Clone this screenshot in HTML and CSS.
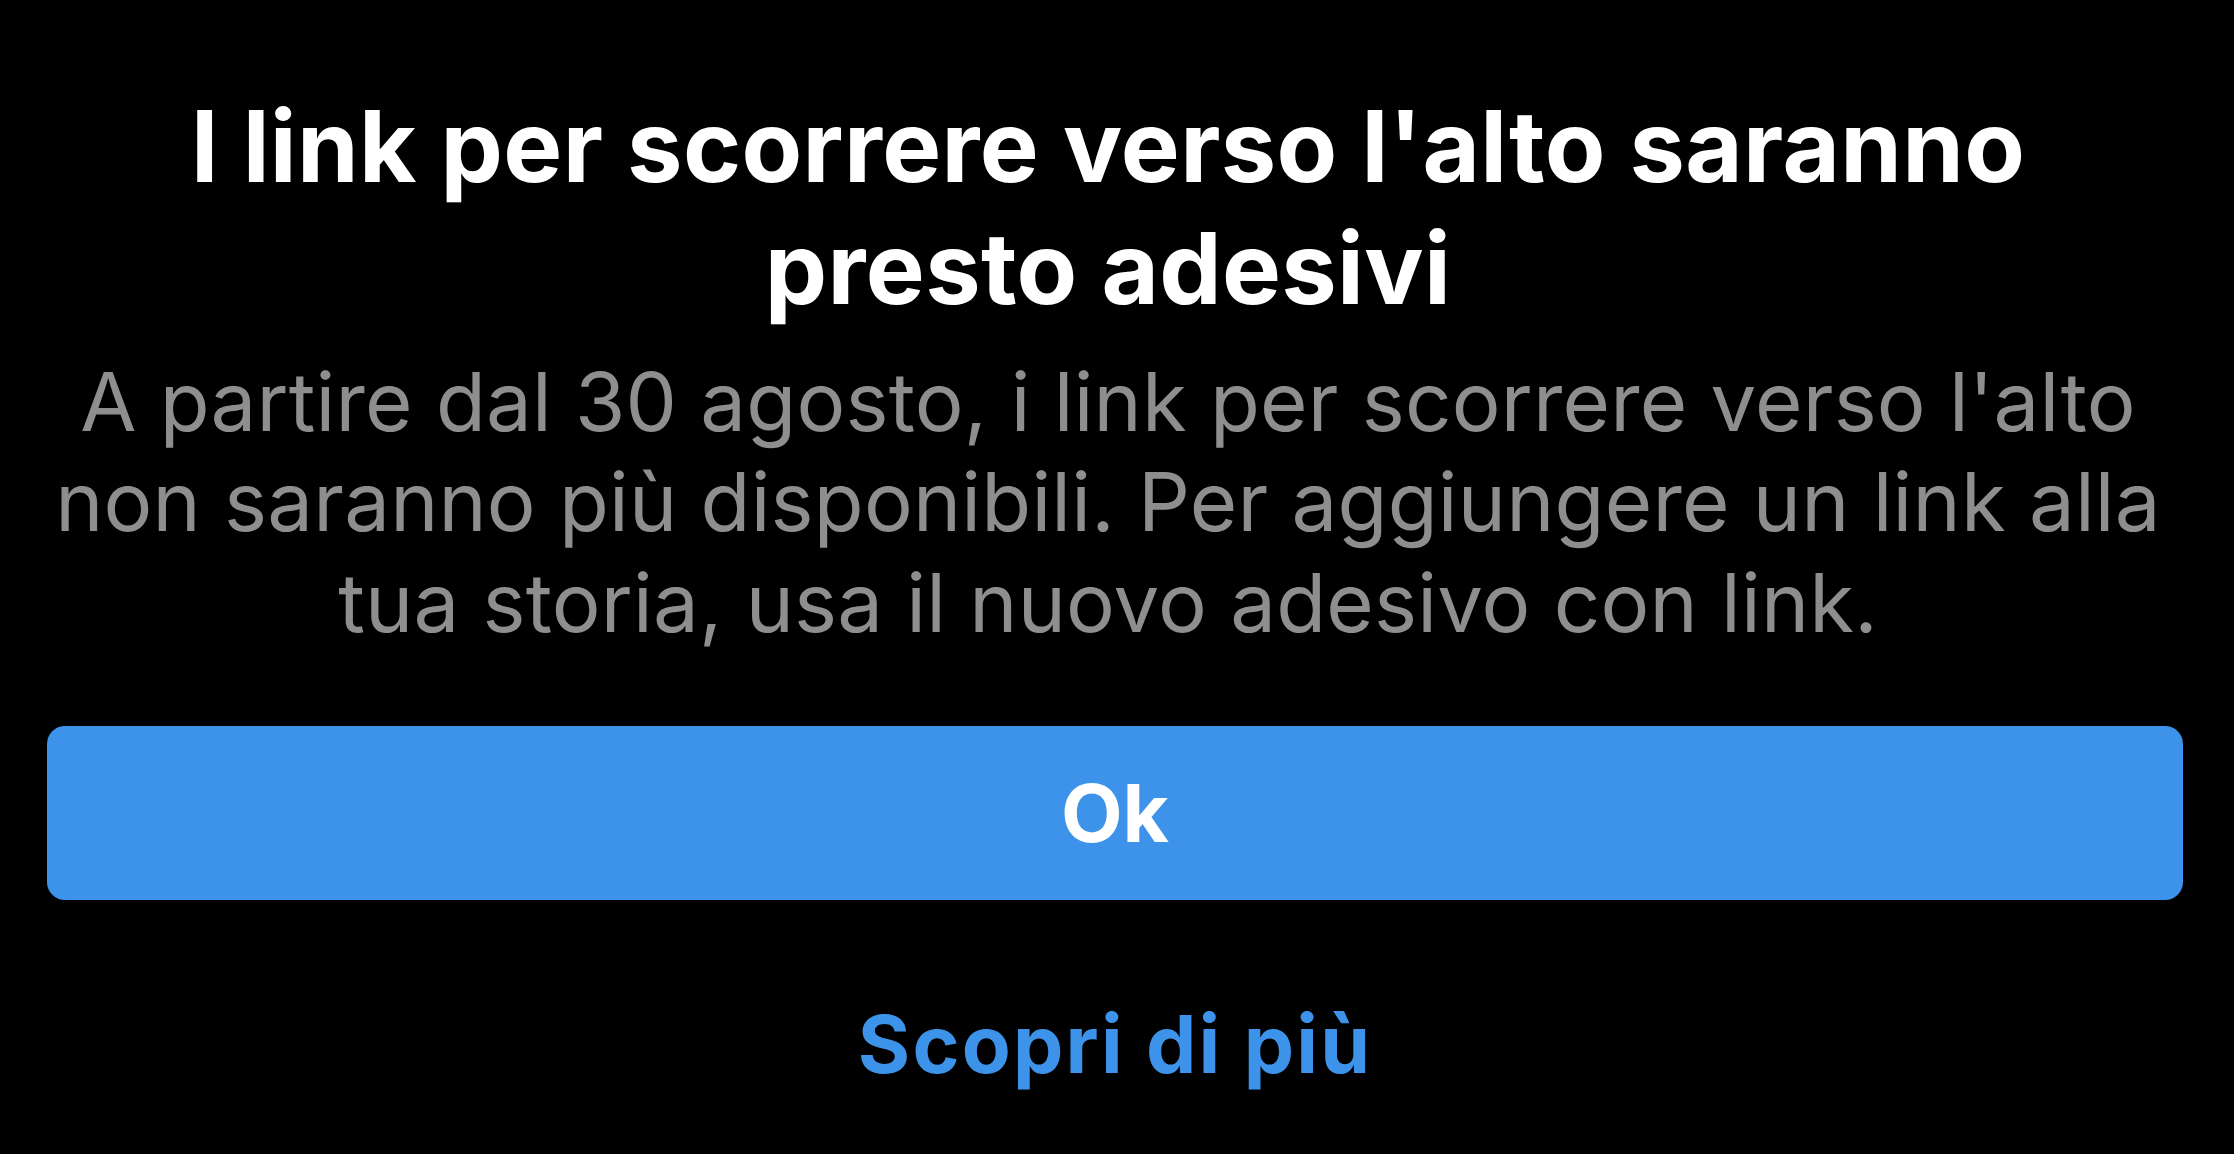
FILE: index.html
```html
<!DOCTYPE html>
<html lang="it">
<head>
<meta charset="utf-8">
<title>Adesivi link</title>
<link rel="stylesheet" href="styles.css">
</head>
<body>
<main class="sheet">
  <h1 class="title">I link per scorrere verso l'alto saranno<br>presto adesivi</h1>
  <p class="message">A partire dal 30 agosto, i link per scorrere verso l'alto<br>non saranno più disponibili. Per aggiungere un link alla<br>tua storia, usa il nuovo adesivo con link.</p>
  <button class="primary" type="button">Ok</button>
  <a class="secondary" href="#">Scopri di più</a>
</main>
</body>
</html>
```
FILE: styles.css
```css
html, body {
  margin: 0;
  padding: 0;
  background: #000;
}
body {
  font-family: Inter, "Liberation Sans", sans-serif;
  width: 2234px;
  height: 1154px;
  overflow: hidden;
}
.sheet {
  display: flex;
  flex-direction: column;
  align-items: stretch;
  padding: 85px 51px 0 47px;
  text-align: center;
}
.title {
  margin: 0;
  padding-right: 14px;
  color: #fff;
  font-size: 99px;
  font-weight: 700;
  line-height: 122px;
  letter-spacing: 0.35px;
}
.message {
  margin: 23px 0 0;
  padding-right: 14px;
  color: #8e8e8e;
  font-size: 81.5px;
  font-weight: 400;
  line-height: 100.3px;
  letter-spacing: 0.2px;
}
.primary {
  margin-top: 73px;
  height: 174px;
  border: 0;
  border-radius: 18px;
  background: #3d93ea;
  color: #fff;
  font-family: inherit;
  font-size: 80px;
  font-weight: 700;
  line-height: 174px;
  padding: 0;
}
.secondary {
  margin-top: 94px;
  color: #3d93ea;
  font-size: 80px;
  font-weight: 700;
  line-height: 100px;
  letter-spacing: 2.2px;
  text-decoration: none;
}
```
